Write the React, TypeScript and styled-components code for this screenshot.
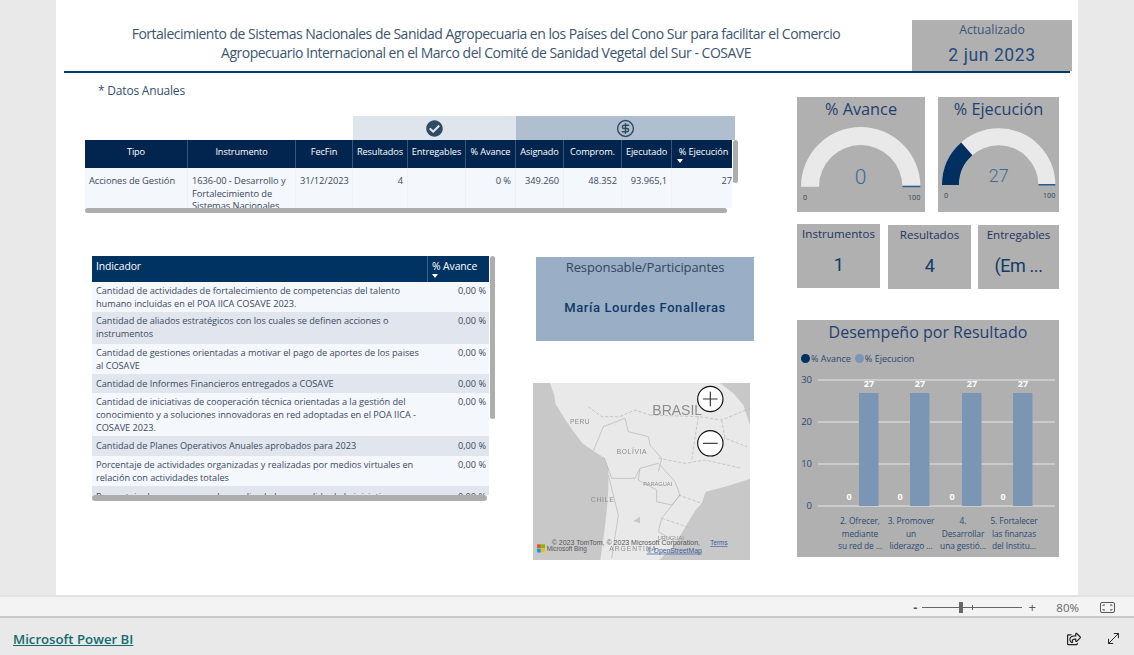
import styled, { createGlobalStyle } from 'styled-components'
import { CircleDollarSign, MoveDiagonal } from 'lucide-react'
import { FaCheckCircle, FaRegShareSquare } from 'react-icons/fa'

const GlobalStyle = createGlobalStyle`
  html, body {
    margin: 0;
    padding: 0;
    width: 1134px;
    height: 655px;
    overflow: hidden;
    background: #e9e9e9;
    font-family: 'Open Sans', 'Noto Sans', sans-serif;
  }
  * { box-sizing: border-box; }
`

const din = `Roboto, 'Liberation Sans', sans-serif`

const Page = styled.div`
  width: 1134px;
  height: 655px;
  display: flex;
  flex-direction: column;
  background: #e9e9e9;
`

const Canvas = styled.main`
  width: 1022px;
  height: 595px;
  margin-left: 56px;
  padding: 0 8px;
  background: #fff;
  overflow: hidden;
`

const Header = styled.header`
  display: flex;
  height: 73px;
  width: 1006px;
  border-bottom: 2px solid #00396b;
`

const Title = styled.h1`
  flex: none;
  width: 844px;
  margin: 0 4px 0 0;
  padding-top: 24px;
  font-size: 14px;
  font-weight: 400;
  line-height: 19px;
  letter-spacing: -0.5px;
  text-align: center;
  color: #3c5570;
`

const UpdatedCard = styled.div`
  flex: none;
  width: 160px;
  height: 51px;
  margin-top: 20px;
  background: #b0b0b0;
  text-align: center;
`

const UpdatedLabel = styled.div`
  padding-top: 1px;
  font-size: 12.2px;
  line-height: 18px;
  color: #3a5478;
`

const UpdatedValue = styled.div`
  margin-top: 4px;
  font-family: ${din};
  font-size: 17.5px;
  line-height: 24px;
  letter-spacing: 0.6px;
  color: #234a7c;
`

const Body = styled.div`
  display: flex;
  padding-left: 21px;
`

const LeftColumn = styled.div`
  width: 712px;
  flex: none;
`

const Note = styled.div`
  margin: 9px 0 0 13px;
  font-size: 12px;
  line-height: 17px;
  letter-spacing: -0.2px;
  color: #34506e;
`

const Band = styled.div`
  display: flex;
  height: 24px;
  margin: 17px 0 0 268px;
`

const BandCell = styled.div<{ $width: number; $bg: string }>`
  display: flex;
  align-items: center;
  justify-content: center;
  width: ${(p) => p.$width}px;
  background: ${(p) => p.$bg};
  color: #2f4a63;
`

const ScrollWrap = styled.div<{ $width: number }>`
  position: relative;
  width: ${(p) => p.$width}px;
`

const budgetColumns = '103px 108px 57px 55px 58px 50px 48px 58px 50px 60px'

const BudgetHead = styled.div`
  display: grid;
  grid-template-columns: ${budgetColumns};
  height: 28px;
  background: #02254f;
`

const BudgetHeadCell = styled.div`
  position: relative;
  padding-top: 4px;
  font-size: 9.2px;
  line-height: 16px;
  letter-spacing: -0.1px;
  text-align: center;
  white-space: nowrap;
  color: #fff;
  border-right: 1px solid #3a5578;
  &:last-child { border-right: 0; padding-left: 3px; }
`

const Caret = styled.span`
  position: absolute;
  width: 0;
  height: 0;
  border-left: 3px solid transparent;
  border-right: 3px solid transparent;
  border-top: 4px solid #fff;
`

const HeadCaret = styled(Caret)`
  left: 5px;
  top: 19px;
`

const BudgetRow = styled.div`
  display: grid;
  grid-template-columns: ${budgetColumns};
  height: 40px;
  overflow: hidden;
  background: #f4f7fc;
`

const BudgetCell = styled.div<{ $right?: boolean }>`
  padding: 7px 4px 0;
  font-size: 9.3px;
  line-height: 12.6px;
  letter-spacing: -0.06px;
  color: #3b4a5c;
  text-align: ${(p) => (p.$right ? 'right' : 'left')};
  white-space: ${(p) => (p.$right ? 'nowrap' : 'normal')};
  border-right: 1px solid #edf1f7;
  &:last-child { border-right: 0; padding-right: 0; }
`

const HScroll = styled.div<{ $width: number; $height: number }>`
  width: ${(p) => p.$width}px;
  height: ${(p) => p.$height}px;
  border-radius: 3px;
  background: #adadad;
`

const VScroll = styled.div<{ $left: number; $height: number }>`
  position: absolute;
  top: 0;
  left: ${(p) => p.$left}px;
  width: 5px;
  height: ${(p) => p.$height}px;
  border-radius: 3px;
  background: #adadad;
`

const LowerRow = styled.div`
  display: flex;
  margin-top: 43px;
  padding-left: 7px;
`

const IndicatorHead = styled.div`
  display: grid;
  grid-template-columns: 335px 62px;
  height: 26px;
  background: #003262;
`

const IndicatorHeadCell = styled.div`
  position: relative;
  padding: 2px 0 0 4px;
  font-size: 10.4px;
  line-height: 16px;
  letter-spacing: -0.1px;
  color: #fff;
  & + & { border-left: 1px solid #3a5f88; }
`

const IndicatorCaret = styled(Caret)`
  left: 4px;
  top: 18px;
`

const IndicatorBody = styled.div`
  height: 213px;
  overflow: hidden;
`

const IndicatorRow = styled.div<{ $height: number; $alt: boolean; $pad: number }>`
  display: grid;
  grid-template-columns: 335px 62px;
  height: ${(p) => p.$height}px;
  padding-top: ${(p) => p.$pad}px;
  background: ${(p) => (p.$alt ? '#e1e6ee' : '#f4f7fc')};
  font-size: 9.2px;
  line-height: 12.9px;
  letter-spacing: -0.03px;
  color: #3b4a5c;
`

const IndicatorText = styled.div`
  padding: 0 4px;
`

const IndicatorValue = styled.div`
  padding-right: 3px;
  text-align: right;
`

const MiddleColumn = styled.div`
  margin-left: 44px;
`

const ResponsibleCard = styled.div`
  width: 218px;
  height: 84px;
  margin: 1px 0 0 3px;
  background: #9aaec5;
  text-align: center;
`

const ResponsibleLabel = styled.div`
  padding-top: 1px;
  font-size: 13px;
  line-height: 18px;
  letter-spacing: -0.1px;
  color: #33465f;
`

const ResponsibleName = styled.div`
  margin-top: 22px;
  font-family: ${din};
  font-size: 13px;
  font-weight: 500;
  line-height: 20px;
  letter-spacing: 0.6px;
  color: #0f3a68;
`

const MapBox = styled.svg`
  display: block;
  width: 217px;
  height: 177px;
  margin-top: 42px;
`

const MapBase = styled.g`
  filter: blur(0.35px);
`

const RightColumn = styled.aside`
  width: 262px;
  flex: none;
  padding-top: 24px;
`

const GaugeRow = styled.div`
  display: flex;
  gap: 13px;
`

const GaugeCard = styled.div<{ $width: number }>`
  width: ${(p) => p.$width}px;
  height: 115px;
  background: #b0b0b0;
  text-align: center;
`

const GaugeTitle = styled.div`
  font-size: 16.3px;
  line-height: 24px;
  color: #1f3f70;
`

const GaugeSvg = styled.svg`
  display: block;
`

const CardRow = styled.div`
  display: flex;
  align-items: flex-start;
  margin-top: 12px;
`

const StatCard = styled.div<{ $width: number; $gap: number; $drop: number }>`
  width: ${(p) => p.$width}px;
  height: 64px;
  margin-left: ${(p) => p.$gap}px;
  margin-top: ${(p) => p.$drop}px;
  background: #b0b0b0;
  text-align: center;
`

const StatLabel = styled.div`
  padding-top: 1px;
  font-size: 11.6px;
  line-height: 17px;
  color: #1f3560;
`

const StatValue = styled.div`
  margin-top: 11px;
  font-family: ${din};
  font-size: 18px;
  line-height: 24px;
  letter-spacing: -0.4px;
  color: #123a66;
`

const ChartCard = styled.div`
  width: 262px;
  height: 237px;
  margin-top: 31px;
  background: #b0b0b0;
`

const ChartTitle = styled.div`
  font-size: 16px;
  line-height: 24px;
  text-align: center;
  color: #1f3f70;
`

const Legend = styled.div`
  display: flex;
  align-items: center;
  height: 14px;
  margin-top: 7px;
  padding-left: 4px;
  font-size: 9px;
  color: #2d4a70;
`

const LegendDot = styled.span<{ $color: string }>`
  width: 9px;
  height: 9px;
  margin-right: 1px;
  border-radius: 50%;
  background: ${(p) => p.$color};
  & ~ & { margin-left: 4px; }
`

const ChartSvg = styled.svg`
  display: block;
`

const StatusBar = styled.div`
  display: flex;
  align-items: center;
  justify-content: flex-end;
  height: 23px;
  padding: 1px 19px 0 0;
  background: #f3f3f3;
  border-top: 2px solid #e2e2e2;
  border-bottom: 2px solid #c9c9c9;
  font-size: 12px;
  color: #666;
`

const ZoomSign = styled.span<{ $strong?: boolean }>`
  width: 10px;
  font-size: 13px;
  font-weight: ${(p) => (p.$strong ? 700 : 400)};
  line-height: 14px;
  text-align: center;
  color: #555;
`

const ZoomTrack = styled.div`
  position: relative;
  width: 100px;
  height: 1px;
  margin: 0 5px 0 2px;
  background: #666;
`

const ZoomTick = styled.span`
  position: absolute;
  left: 50px;
  top: -2px;
  width: 1px;
  height: 5px;
  background: #666;
`

const ZoomThumb = styled.span`
  position: absolute;
  left: 37px;
  top: -5px;
  width: 4px;
  height: 11px;
  background: #666;
`

const ZoomValue = styled.span`
  margin: 0 21px 0 19px;
  font-size: 11.5px;
`

const Footer = styled.footer`
  flex: 1;
  display: flex;
  align-items: center;
  padding: 4px 12px 0 13px;
  color: #222;
`

const PowerBiLink = styled.a`
  font-size: 13.2px;
  font-weight: 600;
  color: #136b6b;
  text-decoration: underline;
`

const FooterIcons = styled.div`
  display: flex;
  align-items: center;
  gap: 24px;
  margin-left: auto;
`

const budgetHeads = ['Tipo', 'Instrumento', 'FecFin', 'Resultados', 'Entregables', '% Avance', 'Asignado', 'Comprom.', 'Ejecutado', '% Ejecución']

const indicators = [
  { text: 'Cantidad de actividades de fortalecimiento de competencias del talento humano incluidas en el POA IICA COSAVE 2023.', height: 30, pad: 3 },
  { text: 'Cantidad de aliados estratégicos con los cuales se definen acciones o instrumentos', height: 32, pad: 3 },
  { text: 'Cantidad de gestiones orientadas a motivar el pago de aportes de los paises al COSAVE', height: 30, pad: 3 },
  { text: 'Cantidad de Informes Financieros entregados a COSAVE', height: 19, pad: 4 },
  { text: 'Cantidad de iniciativas de cooperación técnica orientadas a la gestión del conocimiento y a soluciones innovadoras en red adoptadas en el POA IICA - COSAVE 2023.', height: 43, pad: 3 },
  { text: 'Cantidad de Planes Operativos Anuales aprobados para 2023', height: 20, pad: 4 },
  { text: 'Porcentaje de actividades organizadas y realizadas por medios virtuales en relación con actividades totales', height: 30, pad: 3 },
  { text: 'Porcentaje de personas que han aplicado lo aprendido de la iniciativa técnica', height: 30, pad: 5 },
]

const bars = [
  { x: 62, zero: 52, cx: 63, lines: ['2. Ofrecer,', 'mediante', 'su red de ...'] },
  { x: 113, zero: 103, cx: 114, lines: ['3. Promover', 'un', 'liderazgo ...'] },
  { x: 165, zero: 155, cx: 166, lines: ['4.', 'Desarrollar', 'una gestió...'] },
  { x: 216, zero: 206, cx: 217, lines: ['5. Fortalecer', 'las finanzas', 'del Institu...'] },
]

function polar(cx: number, cy: number, r: number, degFromLeft: number) {
  const a = (Math.PI * degFromLeft) / 180
  return [cx - r * Math.cos(a), cy - r * Math.sin(a)]
}

function arcPath(cx: number, cy: number, outer: number, inner: number, deg: number) {
  const [ox, oy] = polar(cx, cy, outer, deg)
  const [ix, iy] = polar(cx, cy, inner, deg)
  return `M${cx - outer} ${cy}A${outer} ${outer} 0 0 1 ${ox} ${oy}L${ix} ${iy}A${inner} ${inner} 0 0 0 ${cx - inner} ${cy}Z`
}

function Gauge(props: { title: string; value: number; width: number; cx: number; cy: number; outer: number; inner: number; size: number }) {
  const { title, value, width, cx, cy, outer, inner, size } = props
  const h = 91
  return (
    <GaugeCard $width={width}>
      <GaugeTitle>{title}</GaugeTitle>
      <GaugeSvg width={width} height={h} viewBox={`0 24 ${width} ${h}`}>
        <path d={arcPath(cx, cy, outer, inner, 180)} fill="#e9e9e9" />
        {value > 0 && <path d={arcPath(cx, cy, outer, inner, (value / 100) * 180)} fill="#00305f" />}
        <rect x={cx + inner} y={cy - 1} width={outer - inner} height={1.5} fill="#2a5a8a" />
        <text x={cx} y={cy - 3} textAnchor="middle" fontFamily={din} fontSize={size} fontWeight={300} fill="#3f6a95">{value}</text>
        <text x={cx - outer + 2} y={cy + 13} fontFamily={din} fontSize={7.5} fill="#3d5066">0</text>
        <text x={cx + outer} y={cy + 13} textAnchor="end" fontFamily={din} fontSize={7.5} fill="#3d5066">100</text>
      </GaugeSvg>
    </GaugeCard>
  )
}

function SouthAmericaMap() {
  const label = { fontFamily: "'Liberation Sans', sans-serif", fill: '#8c8c8c' }
  const credit = { fontFamily: "'Liberation Sans', sans-serif", fill: '#555', fontSize: 18 }
  const link = { fontFamily: "'Liberation Sans', sans-serif", fill: '#3b5a9a', fontSize: 19, textDecoration: 'underline' }
  return (
    <MapBox viewBox="24 24 651 531">
      <rect x="24" y="24" width="651" height="531" fill="#c8c8c8" />
      <MapBase>
        <path
          d="M75 24 L88 62 L92 88 L118 130 L140 162 L172 205 L205 228 L238 248 L250 280 L250 340 L246 400 L238 470 L226 555 L402 555 L440 520 L470 475 L490 440 L512 405 L530 385 L542 350 L600 335 L675 312 L675 150 L655 90 L625 55 L585 24 Z"
          fill="#e9e9e9"
        />
        <g fill="none" stroke="#b4b4b4" strokeWidth="2">
          <path d="M190 95 L230 125 L285 125 L330 105 L375 120" strokeDasharray="10 5" />
          <path d="M375 120 L520 125 L590 135 L675 100" strokeDasharray="10 5" />
          <path d="M205 228 L235 155 L300 130" />
          <path d="M300 130 L310 170 L370 185 L375 210 L410 250 L400 290" />
          <path d="M238 248 L260 310 L285 310 L330 310 L345 280 L400 265" />
          <path d="M345 280 L340 315 L395 345 L395 380 L440 390 L465 360" />
          <path d="M400 265 L450 320 L465 360" />
          <path d="M465 360 L410 430 L400 470 L450 500" />
          <path d="M410 430 L500 460" strokeDasharray="10 5" />
          <path d="M250 300 L280 420 L260 550" />
          <path d="M400 250 L480 265 L540 255 L650 280" strokeDasharray="10 5" />
          <path d="M520 125 L505 220 L500 260" strokeDasharray="10 5" />
          <path d="M590 135 L600 190 L665 215" strokeDasharray="10 5" />
          <path d="M460 360 L530 385" strokeDasharray="10 5" />
          <path d="M600 190 L560 250" strokeDasharray="10 5" />
        </g>
        <path d="M325 438 L345 425 L345 445 Z" fill="#c8c8c8" />
        <text x="382" y="121" fontSize="42" {...label}>BRASIL</text>
        <text x="135" y="148" fontSize="20" letterSpacing="1" {...label}>PERU</text>
        <text x="275" y="238" fontSize="20" letterSpacing="2" {...label}>BOLÍVIA</text>
        <text x="355" y="334" fontSize="17" {...label}>PARAGUAI</text>
        <text x="197" y="382" fontSize="21" letterSpacing="2" {...label}>CHILE</text>
        <text x="398" y="494" fontSize="17" {...label}>URUGUAI</text>
        <text x="253" y="528" fontSize="20" letterSpacing="3" {...label}>ARGENTINA</text>
      </MapBase>
      <text x="80" y="510" {...credit} fontSize="21">© 2023 TomTom, © 2023 Microsoft Corporation,</text>
      <text x="556" y="510" {...link}>Terms</text>
      <text x="365" y="533" {...link} fontSize="20.5">© OpenStreetMap</text>
      <text x="65" y="528" {...credit} fontSize="19">Microsoft Bing</text>
      <rect x="36" y="508" width="11.5" height="11.5" fill="#f25022" />
      <rect x="48.5" y="508" width="11.5" height="11.5" fill="#7fba00" />
      <rect x="36" y="521" width="11.5" height="11.5" fill="#00a4ef" />
      <rect x="48.5" y="521" width="11.5" height="11.5" fill="#ffb900" />
      <circle cx="556" cy="72" r="38" fill="#fff" stroke="#111" strokeWidth="3.5" />
      <path d="M534 72H578M556 50V94" stroke="#333" strokeWidth="3.5" />
      <circle cx="556" cy="205" r="38" fill="#fff" stroke="#111" strokeWidth="3.5" />
      <path d="M534 205H578" stroke="#333" strokeWidth="3.5" />
    </MapBox>
  )
}

function PerformanceChart() {
  const rows = [
    { y: 60, label: '30' },
    { y: 102, label: '20' },
    { y: 144, label: '10' },
    { y: 186, label: '0' },
  ]
  return (
    <ChartSvg width={262} height={192} viewBox="0 45 262 192" fontFamily="'Open Sans', sans-serif">
      {rows.map((r) => (
        <g key={r.label}>
          <rect x={21} y={r.y - 0.5} width={237} height={1} fill="#e6e6e6" />
          <text x={15} y={r.y + 3} textAnchor="end" fontSize={9.5} fill="#2d4a70">{r.label}</text>
        </g>
      ))}
      {bars.map((b) => (
        <g key={b.x}>
          <rect x={b.x} y={73} width={19.5} height={113} fill="#7b95b5" />
          <text x={b.x + 10} y={67} textAnchor="middle" fontSize={9} fontWeight={700} fill="#fff">27</text>
          <text x={b.zero} y={180} textAnchor="middle" fontSize={9} fontWeight={700} fill="#fff">0</text>
          {b.lines.map((line, i) => (
            <text key={line} x={b.cx} y={204 + i * 12.5} textAnchor="middle" fontSize={8.4} letterSpacing={-0.1} fill="#2d4a70">{line}</text>
          ))}
        </g>
      ))}
    </ChartSvg>
  )
}

export default function App() {
  return (
    <Page>
      <GlobalStyle />
      <Canvas>
        <Header>
          <Title>
            Fortalecimiento de Sistemas Nacionales de Sanidad Agropecuaria en los Países del Cono Sur para facilitar el Comercio
            <br />
            Agropecuario Internacional en el Marco del Comité de Sanidad Vegetal del Sur - COSAVE
          </Title>
          <UpdatedCard>
            <UpdatedLabel>Actualizado</UpdatedLabel>
            <UpdatedValue>2 jun 2023</UpdatedValue>
          </UpdatedCard>
        </Header>
        <Body>
          <LeftColumn>
            <Note>* Datos Anuales</Note>
            <Band>
              <BandCell $width={163} $bg="#dfe5ec">
                <FaCheckCircle size={17} />
              </BandCell>
              <BandCell $width={219} $bg="#b0bfd0">
                <CircleDollarSign size={19} strokeWidth={1.8} />
              </BandCell>
            </Band>
            <ScrollWrap $width={647}>
              <BudgetHead>
                {budgetHeads.map((head) => (
                  <BudgetHeadCell key={head}>
                    {head}
                    {head === '% Ejecución' && <HeadCaret />}
                  </BudgetHeadCell>
                ))}
              </BudgetHead>
              <BudgetRow>
                <BudgetCell>Acciones de Gestión</BudgetCell>
                <BudgetCell>1636-00 - Desarrollo y Fortalecimiento de Sistemas Nacionales</BudgetCell>
                <BudgetCell>31/12/2023</BudgetCell>
                <BudgetCell $right>4</BudgetCell>
                <BudgetCell $right />
                <BudgetCell $right>0 %</BudgetCell>
                <BudgetCell $right>349.260</BudgetCell>
                <BudgetCell $right>48.352</BudgetCell>
                <BudgetCell $right>93.965,1</BudgetCell>
                <BudgetCell $right>27</BudgetCell>
              </BudgetRow>
              <HScroll $width={642} $height={5} />
              <VScroll $left={648} $height={43} />
            </ScrollWrap>
            <LowerRow>
              <ScrollWrap $width={397}>
                <IndicatorHead>
                  <IndicatorHeadCell>Indicador</IndicatorHeadCell>
                  <IndicatorHeadCell>
                    % Avance
                    <IndicatorCaret />
                  </IndicatorHeadCell>
                </IndicatorHead>
                <IndicatorBody>
                  {indicators.map((row, i) => (
                    <IndicatorRow key={row.text} $height={row.height} $pad={row.pad} $alt={i % 2 === 1}>
                      <IndicatorText>{row.text}</IndicatorText>
                      <IndicatorValue>0,00 %</IndicatorValue>
                    </IndicatorRow>
                  ))}
                </IndicatorBody>
                <HScroll $width={395} $height={6} />
                <VScroll $left={398} $height={163} />
              </ScrollWrap>
              <MiddleColumn>
                <ResponsibleCard>
                  <ResponsibleLabel>Responsable/Participantes</ResponsibleLabel>
                  <ResponsibleName>María Lourdes Fonalleras</ResponsibleName>
                </ResponsibleCard>
                <SouthAmericaMap />
              </MiddleColumn>
            </LowerRow>
          </LeftColumn>
          <RightColumn>
            <GaugeRow>
              <Gauge title="% Avance" value={0} width={128} cx={63.7} cy={89.7} outer={59.7} inner={41.7} size={21} />
              <Gauge title="% Ejecución" value={27} width={121} cx={60.7} cy={88} outer={56.7} inner={39.7} size={18} />
            </GaugeRow>
            <CardRow>
              <StatCard $width={83} $gap={0} $drop={0}>
                <StatLabel>Instrumentos</StatLabel>
                <StatValue>1</StatValue>
              </StatCard>
              <StatCard $width={83} $gap={8} $drop={1}>
                <StatLabel>Resultados</StatLabel>
                <StatValue>4</StatValue>
              </StatCard>
              <StatCard $width={81} $gap={7} $drop={1}>
                <StatLabel>Entregables</StatLabel>
                <StatValue>(Em ...</StatValue>
              </StatCard>
            </CardRow>
            <ChartCard>
              <ChartTitle>Desempeño por Resultado</ChartTitle>
              <Legend>
                <LegendDot $color="#00305f" />
                % Avance
                <LegendDot $color="#7b95b5" />
                % Ejecucion
              </Legend>
              <PerformanceChart />
            </ChartCard>
          </RightColumn>
        </Body>
      </Canvas>
      <StatusBar>
        <ZoomSign $strong>-</ZoomSign>
        <ZoomTrack>
          <ZoomTick />
          <ZoomThumb />
        </ZoomTrack>
        <ZoomSign>+</ZoomSign>
        <ZoomValue>80%</ZoomValue>
        <svg width="15" height="11" viewBox="0 0 15 11" fill="none" stroke="#555">
          <rect x="0.5" y="0.5" width="14" height="10" rx="1.5" />
          <path d="M3 4V3H5M10 3H12V4M3 7V8H5M10 8H12V7" />
        </svg>
      </StatusBar>
      <Footer>
        <PowerBiLink href="#">Microsoft Power BI</PowerBiLink>
        <FooterIcons>
          <FaRegShareSquare size={14} />
          <MoveDiagonal size={17} strokeWidth={1.4} />
        </FooterIcons>
      </Footer>
    </Page>
  )
}
